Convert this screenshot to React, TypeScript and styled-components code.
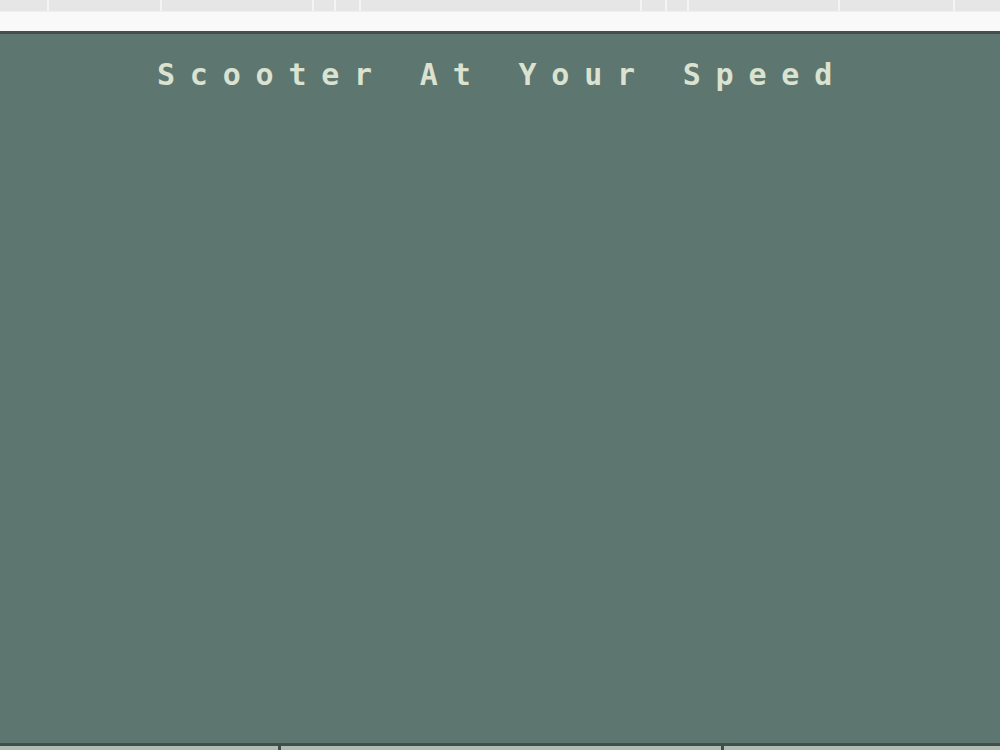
import React from "react";
import styled, { createGlobalStyle } from "styled-components";

const Global = createGlobalStyle`
  html, body {
    margin: 0;
    padding: 0;
    background: #f9f9f9;
    overflow: hidden;
  }
`;

const Page = styled.div`
  width: 1000px;
  height: 750px;
  display: flex;
  flex-direction: column;
  overflow: hidden;
`;

const TabStrip = styled.div`
  height: 11px;
  display: flex;
  gap: 2px;
  background: #f4f4f4;
  border-bottom: 1px solid #f0f0f0;
`;

const Tab = styled.div<{ $w: number }>`
  width: ${(p) => p.$w}px;
  flex-shrink: 0;
  background: #e6e6e6;
  &:last-child {
    flex: 1;
  }
`;

const Bar = styled.div`
  height: 19px;
  background: #f9f9f9;
`;

const Panel = styled.main`
  flex: 1;
  background: #5d7670;
  border-top: 3px solid #434d49;
  border-bottom: 3px solid #434d49;
  display: flex;
  flex-direction: column;
  align-items: center;
`;

const Title = styled.h1`
  margin: 24px 0 0;
  padding-left: 4px;
  font-family: "DejaVu Sans Mono", "Liberation Mono", monospace;
  font-size: 30px;
  font-weight: bold;
  letter-spacing: 14.8px;
  color: #dbe2cf;
  line-height: 34px;
`;

const Footer = styled.div`
  height: 4px;
  display: flex;
  gap: 3px;
  background: #434d49;
`;

const FootCell = styled.div<{ $w: number }>`
  width: ${(p) => p.$w}px;
  flex-shrink: 0;
  background: #aebcb2;
  &:last-child {
    flex: 1;
  }
`;

const tabs = [47, 111, 150, 20, 23, 279, 23, 20, 149, 113, 46];

export default function App() {
  return (
    <Page>
      <Global />
      <TabStrip>
        {tabs.map((w, i) => (
          <Tab key={i} $w={w} />
        ))}
      </TabStrip>
      <Bar />
      <Panel>
        <Title>Scooter At Your Speed</Title>
      </Panel>
      <Footer>
        <FootCell $w={278} />
        <FootCell $w={440} />
        <FootCell $w={277} />
      </Footer>
    </Page>
  );
}
